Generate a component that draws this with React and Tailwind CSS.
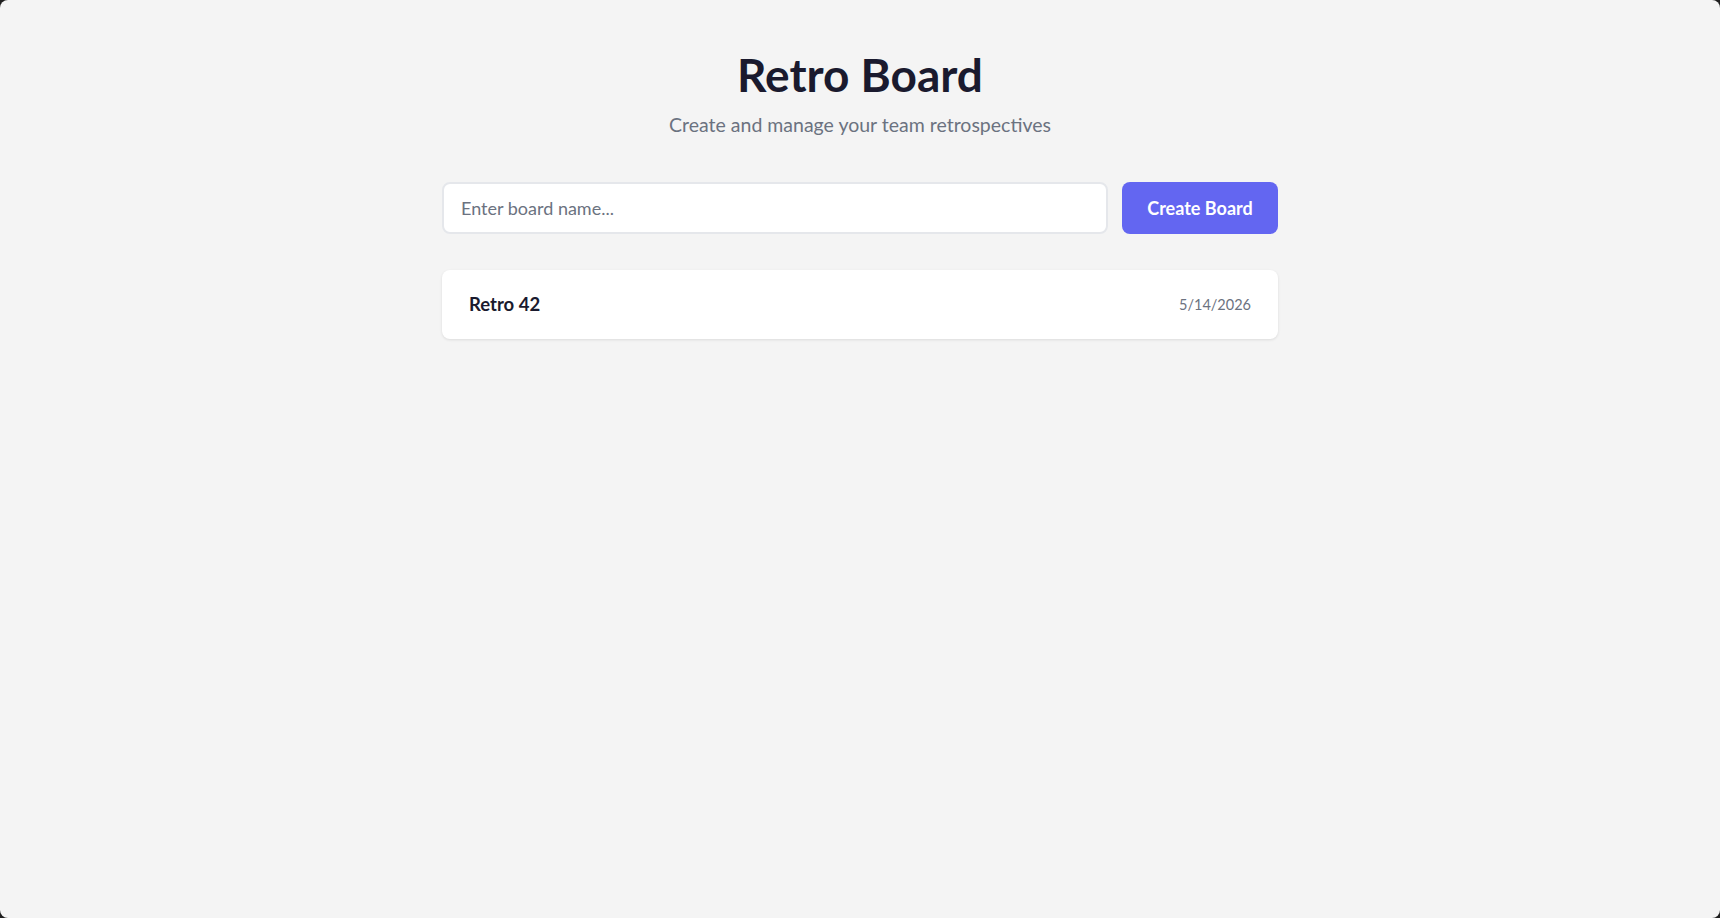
const boards = [{ id: 1, name: "Retro 42", date: "5/14/2026" }];

const App = () => {
  return (
    <div className="min-h-screen bg-[#1f1f1f]">
      <main
        className="min-h-screen rounded-[8px] bg-[#f4f4f4] font-['Segoe_UI',Lato,sans-serif]"
      >
        <div className="mx-auto w-[836px] pt-[47px]">
          <header className="text-center">
            <h1 className="text-[46px] font-bold leading-[1.2] text-[#1a1a2e]">
              Retro Board
            </h1>
            <p className="mt-[9px] text-[19.5px] leading-[1.4] text-[#6b7280]">
              Create and manage your team retrospectives
            </p>
          </header>

          <div className="mt-[44px] flex gap-[14px]">
            <input
              type="text"
              placeholder="Enter board name..."
              className="h-[52px] flex-1 rounded-[8px] border-2 border-[#e5e7eb] bg-white px-[17px] text-[18px] text-[#1a1a2e] outline-none placeholder:text-[#6b7280]"
            />
            <button className="h-[52px] w-[156px] rounded-[8px] bg-[#6366f1] text-[18px] font-bold text-white">
              Create Board
            </button>
          </div>

          <div className="mt-[36px] flex flex-col gap-3">
            {boards.map((b) => (
              <div
                key={b.id}
                className="flex h-[69px] items-center justify-between rounded-[8px] bg-white px-[27px] shadow-[0_1px_3px_rgba(0,0,0,0.1)]"
              >
                <span className="text-[18.5px] font-bold text-[#1a1a2e]">
                  {b.name}
                </span>
                <span className="text-[14.5px] text-[#6b7280]">{b.date}</span>
              </div>
            ))}
          </div>
        </div>
      </main>
    </div>
  );
};

export default App;
